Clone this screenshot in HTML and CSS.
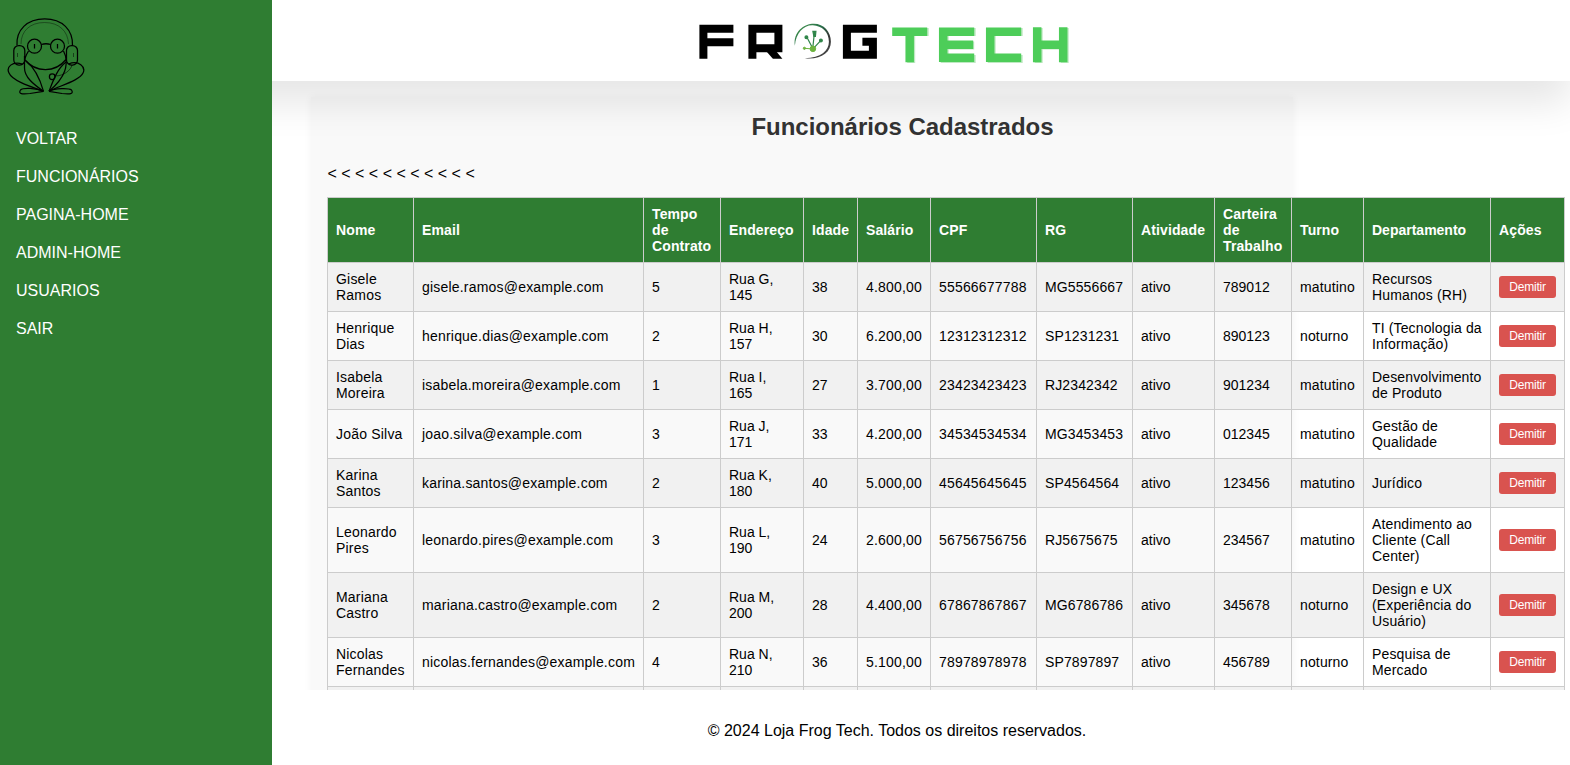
FILE: index.html
```html
<!DOCTYPE html>
<html lang="pt-BR">
<head>
<meta charset="utf-8">
<title>Funcionários Cadastrados</title>
<link rel="stylesheet" href="styles.css">
</head>
<body>
<div class="app">
  <aside class="sidebar">
    <svg class="mascot" viewBox="0 0 80 80" width="80" height="80" fill="none" stroke="#000" stroke-width="1.25">
      <path d="M11 29.500C10 14 21 2.800 38.700 2.800S67 14 66.500 29.500"/>
      <path d="M15 28C15 15 24 6.500 38.500 6.500S62 15 62.500 28" stroke-width=".6" opacity=".65"/>
      <rect x="7.800" y="29.500" width="11" height="19.500" rx="5"/>
      <rect x="60.500" y="29.500" width="11" height="19.500" rx="5"/>
      <path d="M11.500 37v4M67.500 37v4" stroke-width=".5"/>
      <circle cx="28.500" cy="30.200" r="7"/><circle cx="51.500" cy="30.200" r="7"/>
      <path d="M35.300 28.500q4.700-1.500 9.400 0M28.500 28v4.500M51.500 28v4.500"/>
      <path d="M22.500 35C20 39 19 42 18.500 43.500C30 57 49 57 60 43.500C60 41 59 38 57.500 35M18.500 40V52C18.500 61 27 68 37.500 75.300M60 40C61 49 61 60 43 75.300"/>
      <path d="M16.500 48C6 45 0 51 3 57C6 64 20 69 37.500 75.300M20 45C29 52 34 63 37.500 75.300M62.500 48C73 44 80 51 77 57C74 64 56 69 43 75.300M60 46C51 53 47 65 43 75.300"/>
      <path d="M37.500 75.300C30 72 17 71.500 14.500 74C12 78 16 78.500 24 77.500L37.500 75.300M43 75.300C49 72 63 72 65.500 74C68 78 64 78.500 56 77.500L43 75.300"/>
      <circle cx="46.200" cy="60.700" r="2.800"/><path d="M49 60C58 60 65 54 66 49" stroke-width=".6"/>
    </svg>
    <nav class="menu">
      <a>VOLTAR</a><a>FUNCIONÁRIOS</a><a>PAGINA-HOME</a><a>ADMIN-HOME</a><a>USUARIOS</a><a>SAIR</a>
    </nav>
  </aside>
  <div class="page">
    <header class="topbar">
      <svg class="logo" viewBox="-0.9 0.2 380 44" width="380" height="44">
        <defs><linearGradient id="ring" x1="0" y1="0" x2="1" y2="1"><stop offset="0" stop-color="#4a9a50"/><stop offset=".4" stop-color="#28704a"/><stop offset=".65" stop-color="#333"/><stop offset="1" stop-color="#555"/></linearGradient></defs>
        <g fill="none" stroke="#000" stroke-width="8">
          <path d="M38.500 9H8.500V39M4.500 22.500H38.500"/>
          <path d="M57.500 39V9H83.500V28.500H57.500"/>
          <path d="M182 9H152V35H178V22H167.500"/>
        </g>
        <path d="M70 30H80L87.500 39H78Z"/>
        <g fill="none" stroke="#bfe8c2" stroke-width="8" transform="translate(2.300 1.300)">
          <path d="M196.500 11H231.500M214 11V42M278.500 11H247.500V38H278.500M247.500 24.500H277M325.500 11H294.500V38H325.500M341.500 7V42M367.500 7V42M341.500 24.500H367.500"/>
        </g>
        <g fill="none" stroke="#4dcd59" stroke-width="8.500" transform="translate(.8 .4)">
          <path d="M196.500 11.500H231.500M214 11.500V42M278.500 11.500H247.500V37.500H278.500M247.500 24.500H277.500M325.500 11.500H294.500V37.500H325.500M341.500 7V42M367.500 7V42M341.500 24.500H367.500"/>
        </g>
        <path d="M100 26C98 12 109 4 119 4C129 4 136 12 136 22C136 33 126 40 110 38.500C126 38 134 31 134 22C134 12 127 6 118 5.500C109 5 101 13 100 26Z" fill="url(#ring)"/>
        <g fill="#2f8549" stroke="#2f8549" stroke-width="1.200"><path d="M117 27L112 17.500M118 27L119.500 13M119 28L126 20.500"/><circle cx="111.500" cy="17.500" r="1.400"/><path d="M118 11.500h3l-.5 5h-1.500z"/><circle cx="126" cy="20.800" r="1.400"/></g>
        <g fill="#6cb33f" stroke="#6cb33f"><path d="M116 29L109.500 28.500"/><circle cx="118" cy="29" r="2.800"/><circle cx="109.500" cy="28.500" r="1.100"/></g>
      </svg>
    </header>
    <main class="content">
      <section class="panel">
        <h2 class="title">Funcionários Cadastrados</h2>
        <p class="marks">&lt; &lt; &lt; &lt; &lt; &lt; &lt; &lt; &lt; &lt; &lt;</p>
        <table class="staff">
          <colgroup><col class="c86"><col class="c230"><col class="c77"><col class="c83"><col class="c54"><col class="c73"><col class="c106"><col class="c96"><col class="c82"><col class="c77"><col class="c72"><col class="c127"><col class="c74"></colgroup>
          <thead><tr><th>Nome</th><th>Email</th><th>Tempo de Contrato</th><th>Endereço</th><th>Idade</th><th>Salário</th><th>CPF</th><th>RG</th><th>Atividade</th><th>Carteira de Trabalho</th><th>Turno</th><th>Departamento</th><th>Ações</th></tr></thead>
          <tbody>
            <tr><td>Gisele Ramos</td><td>gisele.ramos@example.com</td><td>5</td><td>Rua G, 145</td><td>38</td><td>4.800,00</td><td>55566677788</td><td>MG5556667</td><td>ativo</td><td>789012</td><td>matutino</td><td>Recursos Humanos (RH)</td><td><button class="fire">Demitir</button></td></tr>
            <tr><td>Henrique Dias</td><td>henrique.dias@example.com</td><td>2</td><td>Rua H, 157</td><td>30</td><td>6.200,00</td><td>12312312312</td><td>SP1231231</td><td>ativo</td><td>890123</td><td>noturno</td><td>TI (Tecnologia da Informação)</td><td><button class="fire">Demitir</button></td></tr>
            <tr><td>Isabela Moreira</td><td>isabela.moreira@example.com</td><td>1</td><td>Rua I,<br>165</td><td>27</td><td>3.700,00</td><td>23423423423</td><td>RJ2342342</td><td>ativo</td><td>901234</td><td>matutino</td><td>Desenvolvimento de Produto</td><td><button class="fire">Demitir</button></td></tr>
            <tr><td>João Silva</td><td>joao.silva@example.com</td><td>3</td><td>Rua J, 171</td><td>33</td><td>4.200,00</td><td>34534534534</td><td>MG3453453</td><td>ativo</td><td>012345</td><td>matutino</td><td>Gestão de Qualidade</td><td><button class="fire">Demitir</button></td></tr>
            <tr><td>Karina Santos</td><td>karina.santos@example.com</td><td>2</td><td>Rua K, 180</td><td>40</td><td>5.000,00</td><td>45645645645</td><td>SP4564564</td><td>ativo</td><td>123456</td><td>matutino</td><td>Jurídico</td><td><button class="fire">Demitir</button></td></tr>
            <tr><td>Leonardo Pires</td><td>leonardo.pires@example.com</td><td>3</td><td>Rua L, 190</td><td>24</td><td>2.600,00</td><td>56756756756</td><td>RJ5675675</td><td>ativo</td><td>234567</td><td>matutino</td><td>Atendimento ao Cliente (Call Center)</td><td><button class="fire">Demitir</button></td></tr>
            <tr><td>Mariana Castro</td><td>mariana.castro@example.com</td><td>2</td><td>Rua M, 200</td><td>28</td><td>4.400,00</td><td>67867867867</td><td>MG6786786</td><td>ativo</td><td>345678</td><td>noturno</td><td>Design e UX (Experiência do Usuário)</td><td><button class="fire">Demitir</button></td></tr>
            <tr><td>Nicolas Fernandes</td><td>nicolas.fernandes@example.com</td><td>4</td><td>Rua N, 210</td><td>36</td><td>5.100,00</td><td>78978978978</td><td>SP7897897</td><td>ativo</td><td>456789</td><td>noturno</td><td>Pesquisa de Mercado</td><td><button class="fire">Demitir</button></td></tr>
            <tr class="next"><td></td><td></td><td></td><td></td><td></td><td></td><td></td><td></td><td></td><td></td><td></td><td></td><td></td></tr>
          </tbody>
        </table>
      </section>
    </main>
    <footer class="footer">© 2024 Loja Frog Tech. Todos os direitos reservados.</footer>
  </div>
</div>
</body>
</html>
```
FILE: styles.css
```css
* { box-sizing: border-box; }
body { margin: 0; font-family: "Liberation Sans", Arial, sans-serif; font-size: 16px; color: #000; background: #fff; }
.app { display: flex; width: 100%; height: 765px; overflow: hidden; }
.sidebar { position: relative; z-index: 2; flex: 0 0 272px; background: #2f7d32; padding: 16px 6px; }
.mascot { display: block; }
.menu { display: flex; flex-direction: column; padding: 24px 10px 0; }
.menu a { color: #fff; line-height: 18px; padding: 10px 0; }
.page { flex: 1; min-width: 0; display: flex; flex-direction: column; }
.topbar { position: relative; z-index: 1; flex: 0 0 81px; background: #fff; margin-left: -272px; padding: 20px 0 0 694px; box-shadow: 0 22px 38px rgba(0, 0, 0, .1); }
.logo { display: block; }
.content { flex: 0 0 609px; overflow: hidden; padding: 16px 0 0 39px; }
.panel { width: 982px; height: 700px; background: #f9f9f9; padding: 16px; box-shadow: 0 0 8px rgba(0, 0, 0, .05); }
.title { margin: 0; width: 1151px; text-align: center; font-size: 24px; line-height: 28px; letter-spacing: -.03px; color: #333; }
.marks { margin: 24px 0 14px; padding-left: .5px; line-height: 18px; }
.staff { table-layout: fixed; width: 1238px; border-collapse: collapse; font-size: 14px; line-height: 16px; }
.c54 { width: 54px; } .c72 { width: 72px; } .c73 { width: 73px; } .c74 { width: 74px; } .c77 { width: 77px; }
.c82 { width: 82px; } .c83 { width: 83px; } .c86 { width: 86px; } .c96 { width: 96px; } .c106 { width: 106px; }
.c127 { width: 127px; } .c230 { width: 230px; }
.staff th, .staff td { border: 1px solid #ccc; padding: 8px; text-align: left; vertical-align: middle; }
.staff th { background: #2f7d32; color: #fff; letter-spacing: .12px; }
.staff th:nth-child(12) { letter-spacing: 0; }
.staff td:nth-child(1), .staff td:nth-child(2) { letter-spacing: .2px; }
.staff td:nth-child(11), .staff td:nth-child(12) { letter-spacing: .14px; }
.staff td:nth-child(6) { letter-spacing: .17px; }
.staff td:nth-child(7) { letter-spacing: .18px; }
.staff td:nth-child(8) { letter-spacing: .12px; }
.staff tbody tr:nth-child(odd) { background: #f1f1f1; }
.next { height: 49px; }
.fire { display: block; width: 57px; height: 22px; border: 0; border-radius: 3px; padding: 0; background: #d9534f; color: #fff; font: 12px/22px "Liberation Sans", Arial, sans-serif; letter-spacing: -.2px; text-align: center; }
.footer { flex: 1; padding: 32px 48px 0 0; text-align: center; line-height: 18px; }
```
